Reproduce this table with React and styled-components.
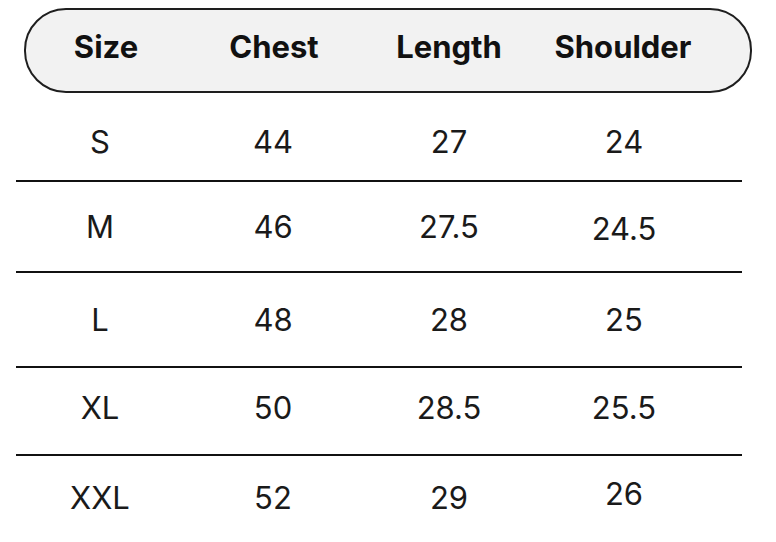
import React from 'react';
import styled, { createGlobalStyle } from 'styled-components';

const GlobalStyle = createGlobalStyle`
  body {
    margin: 0;
    background: #ffffff;
    font-family: Inter, "Noto Sans", sans-serif;
    color: #161616;
  }
`;

const Page = styled.div`
  width: 776px;
  height: 542px;
  overflow: hidden;
  padding-top: 8px;
  box-sizing: border-box;
`;

const HeaderPill = styled.div`
  margin: 0 24px;
  height: 85px;
  box-sizing: border-box;
  border: 2px solid #1e1e1e;
  border-radius: 42px;
  background: #f2f2f2;
  display: grid;
  grid-template-columns: 160px 176px 174px 174px;
  align-items: center;
`;

const HeadCell = styled.div`
  text-align: center;
  font-size: 31px;
  font-weight: 700;
  color: #111;
  padding-bottom: 9px;
`;

const Body = styled.div`
  margin: 0 34px 0 16px;
`;

const Row = styled.div`
  height: ${(p) => p.$h}px;
  box-sizing: border-box;
  padding-top: ${(p) => p.$pad}px;
  border-top: ${(p) => (p.$first ? 'none' : '2px solid #111')};
  display: grid;
  grid-template-columns: 168px 178px 174px 176px;
  align-items: start;
`;

const Cell = styled.div`
  text-align: center;
  font-size: 31px;
  line-height: 36px;
  font-weight: 400;
  color: #1a1a1a;
  transform: translateY(${(p) => p.$dy || 0}px);
`;

const rows = [
  { h: 87, pad: 31, first: true, cells: ['S', '44', '27', '24'] },
  { h: 91, pad: 27, cells: ['M', '46', '27.5', '24.5'], dy: [0, 0, 0, 2] },
  { h: 95, pad: 29, cells: ['L', '48', '28', '25'] },
  { h: 88, pad: 22, cells: ['XL', '50', '28.5', '25.5'] },
  { h: 88, pad: 24, cells: ['XXL', '52', '29', '26'], dy: [0, 0, 0, -4] },
];

const App = () => {
  return (
    <Page>
      <GlobalStyle />
      <HeaderPill>
        <HeadCell>Size</HeadCell>
        <HeadCell>Chest</HeadCell>
        <HeadCell>Length</HeadCell>
        <HeadCell>Shoulder</HeadCell>
      </HeaderPill>
      <Body>
        {rows.map((row, i) => (
          <Row key={i} $h={row.h} $pad={row.pad} $first={row.first}>
            {row.cells.map((c, j) => (
              <Cell key={j} $dy={row.dy ? row.dy[j] : 0}>
                {c}
              </Cell>
            ))}
          </Row>
        ))}
      </Body>
    </Page>
  );
};

export default App;
